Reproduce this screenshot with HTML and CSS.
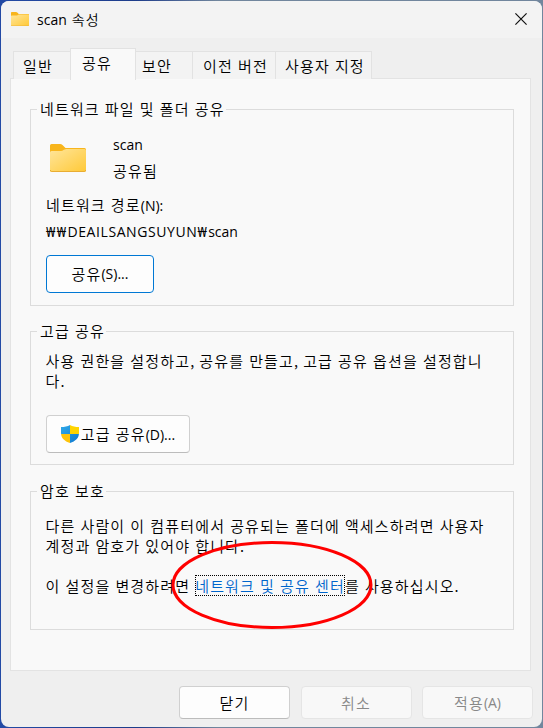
FILE: index.html
```
<!DOCTYPE html>
<html lang="ko">
<head>
<meta charset="utf-8">
<title>scan 속성</title>
<link rel="stylesheet" href="styles.css">
</head>
<body>
<svg class="defs" width="0" height="0" aria-hidden="true">
  <defs>
    <linearGradient id="folder-fill" x1="0" y1="0" x2="1" y2="1">
      <stop offset="0" stop-color="#ffe59a"/><stop offset="1" stop-color="#ffc937"/>
    </linearGradient>
    <linearGradient id="shield-blue" x1="0" y1="0" x2="1" y2="1">
      <stop offset="0" stop-color="#2fa9e8"/><stop offset="1" stop-color="#0f78cf"/>
    </linearGradient>
    <clipPath id="shield-shape"><path d="M9 0C6.500 1.500 3.500 2 0 2V8C0 13 3.500 16.200 9 18C14.500 16.200 18 13 18 8V2C14.500 2 11.500 1.500 9 0Z"/></clipPath>
    <symbol id="folder" viewBox="0 0 36 28" preserveAspectRatio="none">
      <path d="M0 1.500Q0 0 1.500 0H10Q11.500 0 12.500 1L15.500 4H34.500Q36 4 36 5.500V20H0Z" fill="#f8b51c"/>
      <path d="M0 8.500Q0 7 1.500 7H11Q12.500 7 13.500 6L14.500 5.500Q15.300 5 16.500 5H34.500Q36 5 36 6.500V26Q36 28 34.500 28H1.500Q0 28 0 26.500Z" fill="url(#folder-fill)"/>
      <path d="M.3 26Q.3 27.500 1.800 27.500H34.200Q35.700 27.500 35.700 26" fill="none" stroke="#e9ad33"/>
    </symbol>
  </defs>
</svg>
<main class="window">
  <header class="titlebar">
    <svg class="title-icon"><use href="#folder"/></svg>
    <h1 class="title"><span class="latin">scan</span> 속성</h1>
    <svg class="close" width="12" height="12" viewBox="0 0 12 12"><path d="M.4.400 11.600 11.600M11.600.4.400 11.600" stroke="#111" stroke-width="1.200"/></svg>
  </header>
  <nav class="tabs">
    <span class="tab tab-general">일반</span>
    <span class="tab tab-active">공유</span>
    <span class="tab tab-security">보안</span>
    <span class="tab tab-versions">이전 버전</span>
    <span class="tab tab-custom">사용자 지정</span>
  </nav>
  <div class="panel">
    <section class="group group-network">
      <h2 class="legend">네트워크 파일 및 폴더 공유</h2>
      <div class="share">
        <svg class="share-icon"><use href="#folder"/></svg>
        <div>
          <p class="share-name latin">scan</p>
          <p class="share-state">공유됨</p>
        </div>
      </div>
      <p class="path-label">네트워크 경로<span class="latin">(N):</span></p>
      <p class="path latin"><span class="won">₩₩</span><span class="host">DEAILSANGSUYUN</span><span class="won">₩</span>scan</p>
      <button class="button button-share">공유<span class="latin">(S)...</span></button>
    </section>
    <section class="group group-advanced">
      <h2 class="legend">고급 공유</h2>
      <p class="text">사용 권한을 설정하고<span class="comma">,</span> 공유를 만들고<span class="comma">,</span> 고급 공유 옵션을 설정합니<br>다.</p>
      <button class="button button-advanced">
        <svg width="18" height="18" viewBox="0 0 18 18"><g clip-path="url(#shield-shape)"><path d="M0 0H9V9H0ZM9 9H18V18H9Z" fill="url(#shield-blue)"/><path d="M9 0H18V9H9Z" fill="#ffd400"/><path d="M0 9H9V18H0Z" fill="#fdc30b"/></g></svg>
        <span>고급 공유<span class="latin">(D)...</span></span>
      </button>
    </section>
    <section class="group group-password">
      <h2 class="legend">암호 보호</h2>
      <p class="text">다른 사람이 이 컴퓨터에서 공유되는 폴더에 액세스하려면 사용자<br>계정과 암호가 있어야 합니다.</p>
      <p class="text setting">이 설정을 변경하려면 <a class="link">네트워크 및 공유 센터</a>를 사용하십시오.</p>
      <svg class="ring" width="202" height="90" viewBox="0 0 202 90"><ellipse cx="101" cy="45" rx="99" ry="42.500" fill="none" stroke="#f00" stroke-width="3"/></svg>
    </section>
  </div>
  <footer class="actions">
    <button class="button">닫기</button>
    <button class="button" disabled>취소</button>
    <button class="button" disabled>적용<span class="latin">(A)</span></button>
  </footer>
</main>
</body>
</html>
```

FILE: styles.css
```
* { box-sizing: border-box; }
body {
  margin: 0;
  height: 728px;
  overflow: hidden;
  padding: 1px;
  background: linear-gradient(90deg, #234aa5 0, #1d3c8a 25%, #71869d 40%, #71869d 100%);
  font: 15px/20px "Noto Sans CJK KR", sans-serif;
  font-weight: 350;
  letter-spacing: 1.150px;
  word-spacing: -.3px;
  color: #000;
}
h1, h2, p { margin: 0; font-size: inherit; font-weight: inherit; white-space: nowrap; }
.defs { position: absolute; }
.latin { font-family: "Open Sans", "Noto Sans", sans-serif; font-size: 14px; font-weight: 400; letter-spacing: 0; }
.won { letter-spacing: 1.300px; }
.host { letter-spacing: .6px; }
.comma { letter-spacing: 0; }
.window {
  width: 541px;
  height: 726px;
  border-radius: 8px;
  background: #efefef;
  overflow: hidden;
}
.titlebar {
  height: 37px;
  padding: 0 15px 1px 10px;
  display: flex;
  align-items: center;
  background: #f3f3f3;
}
.title-icon { width: 18px; height: 14px; }
.title { margin-left: 8px; font-size: 14px; letter-spacing: 1.300px; }
.close { margin-left: auto; }
.tabs { height: 41px; padding: 0 0 0 12px; display: flex; align-items: flex-end; }
.tab {
  height: 28px;
  padding: 4px 0 0 9px;
  border: solid #e2e2e2;
  border-width: 1px 1px 0 0;
  background: #f3f3f3;
  white-space: nowrap;
}
.tab-general { width: 57px; border-left-width: 1px; border-right: 0; }
.tab-active { width: 66px; height: 32px; margin-bottom: -1px; padding: 4px 0 0 11px; border-left-width: 1px; background: #f9f9f9; position: relative; }
.tab-security { width: 57px; padding-left: 6px; }
.tab-versions { width: 83px; padding-left: 10px; }
.tab-custom { width: 96px; }
.panel {
  width: 521px;
  height: 593px;
  margin-left: 9px;
  margin-top: -1px;
  padding: 30px 16px 0 19px;
  border: 1px solid #e3e3e3;
  background: #f9f9f9;
}
.group { width: 484px; padding-left: 15px; border: 1px solid #dcdcdc; }
.group-network { height: 197px; }
.group-advanced { height: 134px; margin-top: 25px; }
.group-password { height: 139px; margin-top: 26px; position: relative; }
.legend { width: max-content; margin: -11px 0 0 -9px; padding: 0 1px 0 3px; background: #f9f9f9; }
.share { margin: 16px 0 0 4px; display: flex; }
.share-icon { width: 36px; height: 28px; margin: 9px 27px 0 0; }
.share-state { margin-top: 6px; }
.path-label { margin-top: 14px; }
.path { margin-top: 6px; }
.button {
  display: flex;
  align-items: center;
  justify-content: center;
  width: 111px;
  height: 33px;
  padding: 0;
  border: 1px solid #d0d0d0;
  border-bottom-color: #bcbcbc;
  border-radius: 4px;
  background: #fdfdfd;
  color: #000;
  font: inherit;
  letter-spacing: inherit;
  word-spacing: inherit;
}
.button:disabled { border-color: #e5e5e5; background: #f8f8f8; color: #888; }
.button-share { width: 108px; height: 38px; margin-top: 13px; border-color: #0078d4; }
.button-advanced { width: 144px; height: 38px; margin-top: 24px; gap: 2px; }
.text { margin: 10px 0 0 -.5px; }
.group-password .text { margin-top: 15px; }
.group-password .setting { margin-top: 20px; }
.link { color: #0066cc; outline: 1px dotted #000; outline-offset: -1px; }
.ring { position: absolute; left: 140px; top: 48px; }
.actions { margin: 15px 9px 0 0; display: flex; justify-content: flex-end; gap: 10.500px; }
```
